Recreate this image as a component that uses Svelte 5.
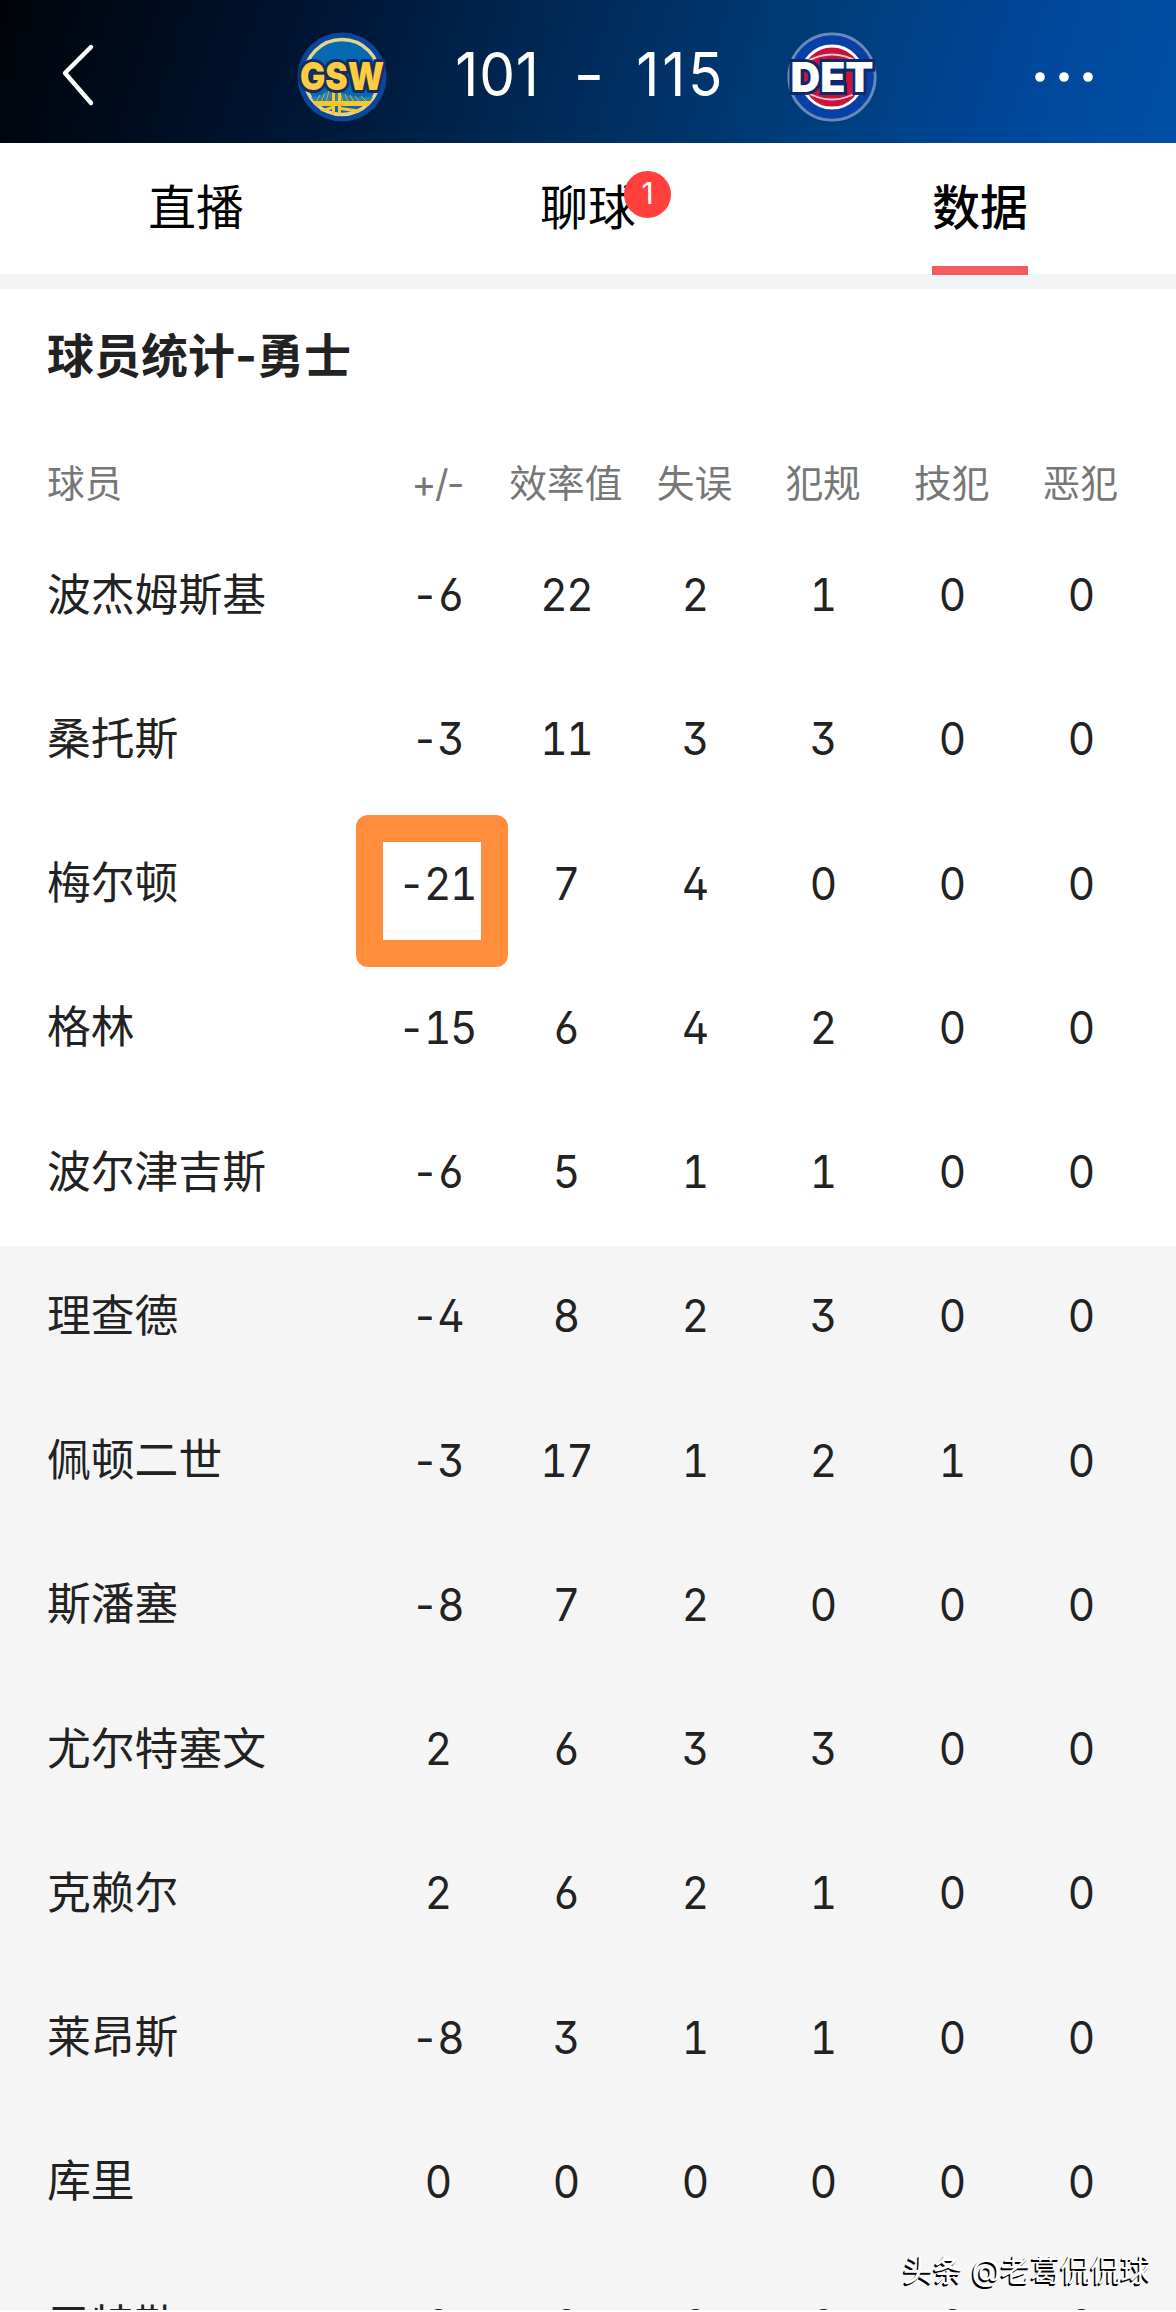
<script>
  const tabs = [
    { label: '直播' },
    { label: '聊球', badge: '1' },
    { label: '数据', active: true }
  ];
  const columns = ['+/-', '效率值', '失误', '犯规', '技犯', '恶犯'];
  const players = [
    { name: '波杰姆斯基', stats: ['-6', '22', '2', '1', '0', '0'] },
    { name: '桑托斯', stats: ['-3', '11', '3', '3', '0', '0'] },
    { name: '梅尔顿', stats: ['-21', '7', '4', '0', '0', '0'], marked: true },
    { name: '格林', stats: ['-15', '6', '4', '2', '0', '0'] },
    { name: '波尔津吉斯', stats: ['-6', '5', '1', '1', '0', '0'] },
    { name: '理查德', stats: ['-4', '8', '2', '3', '0', '0'] },
    { name: '佩顿二世', stats: ['-3', '17', '1', '2', '1', '0'] },
    { name: '斯潘塞', stats: ['-8', '7', '2', '0', '0', '0'] },
    { name: '尤尔特塞文', stats: ['2', '6', '3', '3', '0', '0'] },
    { name: '克赖尔', stats: ['2', '6', '2', '1', '0', '0'] },
    { name: '莱昂斯', stats: ['-8', '3', '1', '1', '0', '0'] },
    { name: '库里', stats: ['0', '0', '0', '0', '0', '0'] },
    { name: '巴特勒', stats: ['0', '0', '0', '0', '0', '0'] }
  ];
  const starters = 5;
</script>

<main class="screen">
  <header class="topbar">
    <svg class="back" viewBox="0 0 40 70" aria-label="返回">
      <path d="M33 6 L7 32 L33 62" fill="none" stroke="#fff" stroke-width="4.4" stroke-linecap="round" stroke-linejoin="round" />
    </svg>
    <div class="score">
      <svg class="logo" viewBox="0 0 92 92">
        <circle cx="46" cy="46" r="44.5" fill="#0b469c" />
        <circle cx="46" cy="46" r="37.5" fill="#0769b4" stroke="#e3d68a" stroke-width="3.4" />
        <path d="M15 66 Q28 66 36 56 Q48 68 77 66 L72 73 H20 Z" fill="#34809f" />
        <path d="M20 71 L24 64 M25 71 L29 62 M30 71 L33 60 M47 71 L44 61 M52 71 L49 63 M58 71 L54 64 M64 71 L59 65 M70 70 L65 65" stroke="#9db67c" stroke-width="1" />
        <path d="M17 70 H75 L72 75 H20 Z M36 56 H39 V84 H36 Z M42 56 H45 V84 H42 Z M24 79 L36 75 V78 L28 81 Z M45 76 L66 79 L62 82 L45 79 Z" fill="#fbc52e" />
        <text x="46" y="58.5" text-anchor="middle" textLength="84" lengthAdjust="spacingAndGlyphs" class="gsw">GSW</text>
      </svg>
      <span class="points home">101</span>
      <span class="points dash">-</span>
      <span class="points away">115</span>
      <svg class="logo" viewBox="0 0 92 92">
        <circle cx="46" cy="46" r="43.2" fill="#0740a6" stroke="#6e88b5" stroke-width="2.8" />
        <circle cx="46" cy="46" r="31" fill="#c8143c" stroke="#fff" stroke-width="2.8" />
        <path d="M20 31 Q46 16 72 31 M20 61 Q46 76 72 61" fill="none" stroke="#fbc7d3" stroke-width="1.8" />
        <text x="46" y="60.5" text-anchor="middle" textLength="83" lengthAdjust="spacingAndGlyphs" class="det">DET</text>
      </svg>
    </div>
    <svg class="more" viewBox="0 0 60 12" aria-label="更多">
      <circle cx="6" cy="6" r="4.8" /><circle cx="30" cy="6" r="4.8" /><circle cx="54" cy="6" r="4.8" />
    </svg>
  </header>

  <nav class="tabs">
    {#each tabs as tab}
      <div class="tab" class:active={tab.active}>
        <span class="label">{tab.label}{#if tab.badge}<b class="badge">{tab.badge}</b>{/if}</span>
      </div>
    {/each}
  </nav>

  <section class="panel">
    <h2>球员统计-勇士</h2>
    <div class="row head">
      <span class="name">球员</span>
      {#each columns as column, c}<span class:diff={c === 0}>{column}</span>{/each}
    </div>
    {#each players as player, i}
      <div class="row" class:bench={i >= starters}>
        <span class="name">{player.name}</span>
        {#each player.stats as stat, c}
          <span class="cell" class:marked={player.marked && c === 0}><span class="stat">{stat}</span></span>
        {/each}
      </div>
    {/each}
  </section>

  <p class="watermark"><b>头条</b> @老葛侃侃球</p>
</main>

<style>
  :global(body) {
    background: #fff;
  }
  .screen {
    position: relative;
    width: 1176px;
    height: 2312px;
    overflow: hidden;
    display: flex;
    flex-direction: column;
    background: #fff;
    color: #222;
    font-family: Inter, 'Noto Sans CJK SC', sans-serif;
  }
  .topbar {
    flex: none;
    height: 143px;
    display: grid;
    grid-template-columns: 296px 1fr 298px;
    align-items: center;
    background: linear-gradient(108deg, #000308 0%, #001431 25%, #002c5c 50%, #003e7d 70%, #00479a 86%, #0050a7 100%);
  }
  .back {
    width: 40px;
    height: 70px;
    margin-left: 58px;
    margin-top: 8px;
  }
  .score {
    display: flex;
    align-items: center;
    color: #fff;
    padding-top: 10px;
  }
  .logo {
    width: 92px;
    height: 92px;
    flex: none;
    overflow: visible;
  }
  .gsw,
  .det {
    font: 900 38px Inter, sans-serif;
    fill: #ffcb3f;
    stroke: #132d5f;
    stroke-width: 6px;
    stroke-linejoin: round;
    paint-order: stroke;
  }
  .det {
    font-size: 41px;
    fill: #fff;
    stroke: #0a2a6c;
    stroke-linejoin: miter;
  }
  .points {
    font-size: 61px;
    line-height: 80px;
    margin-top: -6px;
    text-align: center;
    transform: scaleX(0.93);
    font-feature-settings: 'ss01', 'cv03', 'cv04';
  }
  .home {
    margin-left: 62px;
    width: 95px;
    letter-spacing: 1px;
  }
  .dash {
    width: 88px;
    transform: scaleX(1.1);
  }
  .away {
    width: 94px;
    margin-right: auto;
    letter-spacing: 3px;
    white-space: nowrap;
  }
  .more {
    width: 60px;
    height: 12px;
    fill: #fff;
    margin-left: 156px;
    margin-top: 10px;
  }
  .tabs {
    flex: none;
    height: 131px;
    display: grid;
    grid-template-columns: repeat(3, 1fr);
    border-bottom: 15px solid #f2f3f5;
  }
  .tab {
    display: flex;
    justify-content: center;
    color: #000;
    font-size: 47.8px;
    line-height: 130px;
  }
  .label {
    position: relative;
    height: 123px;
  }
  .active .label {
    font-weight: 500;
    border-bottom: 9px solid #f45b5c;
  }
  .badge {
    position: absolute;
    left: 84px;
    top: 28px;
    width: 47px;
    height: 47px;
    border-radius: 50%;
    background: #ff403c;
    color: #fff;
    font-size: 30px;
    font-weight: 400;
    line-height: 45px;
    text-align: center;
  }
  .panel {
    height: 2021px;
    overflow: hidden;
  }
  h2 {
    margin: 0;
    padding-left: 47px;
    height: 149px;
    font-size: 47px;
    font-weight: 700;
    line-height: 134px;
  }
  .row {
    box-sizing: border-box;
    display: grid;
    grid-template-columns: 326px repeat(6, 128.6px);
    height: 144.25px;
    padding-left: 47px;
    padding-bottom: 2px;
    align-items: center;
    text-align: center;
    font-size: 43.8px;
    line-height: 60px;
  }
  .row.head {
    height: 86.5px;
    align-items: start;
    color: #777;
    font-size: 37.7px;
    white-space: nowrap;
    padding-top: 14.5px;
  }
  .diff {
    letter-spacing: -1.5px;
  }
  .name {
    text-align: left;
  }
  .stat {
    display: inline-block;
    font-size: 44.5px;
    letter-spacing: -1.5px;
    transform: scaleX(0.95);
    font-feature-settings: 'ss01', 'cv03', 'cv04', 'tnum';
  }
  .bench {
    background: #f5f5f5;
  }
  .marked {
    position: relative;
  }
  .marked::before {
    content: '';
    position: absolute;
    left: -17px;
    top: -39px;
    width: 98px;
    height: 98px;
    border: 27px solid #ff8d3c;
    border-radius: 12px;
  }
  .watermark {
    position: absolute;
    left: 903px;
    top: 2249px;
    margin: 0;
    font-size: 30px;
    line-height: 42px;
    color: #fff;
    white-space: nowrap;
    text-shadow: -1px 1px 0 #000, -1.5px 1.5px 0 #000;
  }
  .watermark b {
    font-weight: 500;
  }
</style>
